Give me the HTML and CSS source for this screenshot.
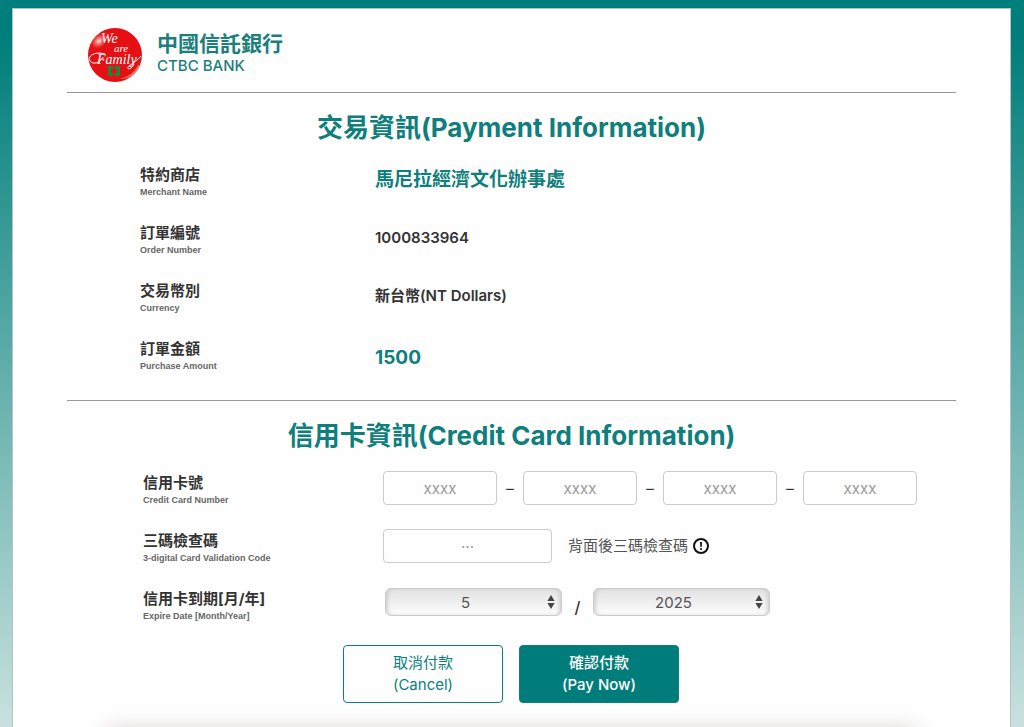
FILE: index.html
```
<!DOCTYPE html>
<html lang="zh-Hant">
<head>
  <meta charset="UTF-8" />
  <meta name="viewport" content="width=device-width, initial-scale=1.0"/>
  <title>CTBC BANK</title>
  <link rel="stylesheet" href="styles.css">
</head>
<body>

  <div class="page">
    <header class="header">
      <svg class="logo" viewBox="0 0 56 56" role="img" aria-label="We are Family">
        <defs>
          <radialGradient id="shine" cx="50%" cy="50%" r="50%">
            <stop offset="0" stop-color="#fff" stop-opacity="0.9"/>
            <stop offset="1" stop-color="#f58a70" stop-opacity="0"/>
          </radialGradient>
        </defs>
        <circle cx="28" cy="28" r="27" fill="#e60f14"/>
        <ellipse cx="12" cy="14" rx="9" ry="7" transform="rotate(-40 12 14)" fill="url(#shine)"/>
        <path d="M51 38 C48 45 41 50 33 52 C43 52 50 46 53 38 Z" fill="#f2705c"/>
        <g class="logo-text">
          <text x="14" y="16" font-size="14">We</text>
          <text x="27" y="25" font-size="11">are</text>
          <text x="10" y="37" font-size="14">Family</text>
        </g>
        <path d="M18 27 C8 24 0 29 3 34 C6 38 13 36 16 30" fill="none" stroke="#fff" stroke-width="1"/>
        <path d="M47 37 C44 44 38 42 42 39 C46 36 51 33 54 29" fill="none" stroke="#fff" stroke-width="1"/>
        <path d="M21 39h5v3h-2v4h2v3h-5zM28 39h5v10h-5v-3h2v-4h-2z" fill="#138a3e"/>
      </svg>
      <div class="brand">
        <span class="brand-zh">中國信託銀行</span>
        <span class="brand-en">CTBC BANK</span>
      </div>
    </header>

    <section class="section">
      <h1>交易資訊(Payment Information)</h1>
      <dl class="info">
        <div class="row">
          <dt>特約商店<small>Merchant Name</small></dt>
          <dd class="big">馬尼拉經濟文化辦事處</dd>
        </div>
        <div class="row">
          <dt>訂單編號<small>Order Number</small></dt>
          <dd>1000833964</dd>
        </div>
        <div class="row">
          <dt>交易幣別<small>Currency</small></dt>
          <dd>新台幣(NT Dollars)</dd>
        </div>
        <div class="row">
          <dt>訂單金額<small>Purchase Amount</small></dt>
          <dd class="big amount">1500</dd>
        </div>
      </dl>
    </section>

    <section class="section">
      <h1>信用卡資訊(Credit Card Information)</h1>
      <form class="card-form">
        <div class="row">
          <label for="card1">信用卡號<small>Credit Card Number</small></label>
          <div class="field">
            <input type="text" id="card1" placeholder="xxxx" maxlength="4">
            <span class="dash">–</span>
            <input type="text" aria-label="Card number 2" placeholder="xxxx" maxlength="4">
            <span class="dash">–</span>
            <input type="text" aria-label="Card number 3" placeholder="xxxx" maxlength="4">
            <span class="dash">–</span>
            <input type="text" aria-label="Card number 4" placeholder="xxxx" maxlength="4">
          </div>
        </div>
        <div class="row">
          <label for="cvc">三碼檢查碼<small>3-digital Card Validation Code</small></label>
          <div class="field">
            <input type="text" id="cvc" class="cvc" placeholder="···" maxlength="3">
            <span class="hint">背面後三碼檢查碼</span>
            <svg class="info-icon" viewBox="0 0 18 18" aria-hidden="true">
              <circle cx="9" cy="9" r="7" fill="none" stroke="#111" stroke-width="2"/>
              <path d="M8 5h2l-0.3 5h-1.4z" fill="#111"/>
              <circle cx="9" cy="12" r="1.1" fill="#111"/>
            </svg>
          </div>
        </div>
        <div class="row">
          <label for="month">信用卡到期[月/年]<small>Expire Date [Month/Year]</small></label>
          <div class="field expire">
            <div class="select">
              <select id="month">
                <option>1</option><option>2</option><option>3</option><option>4</option>
                <option selected>5</option><option>6</option><option>7</option><option>8</option>
                <option>9</option><option>10</option><option>11</option><option>12</option>
              </select>
              <svg class="arrows" viewBox="0 0 8 14" aria-hidden="true"><path d="M4 0l3.6 6H0.4zM4 14l3.6-6H0.4z"/></svg>
            </div>
            <span class="slash">/</span>
            <div class="select">
              <select id="year" aria-label="Year">
                <option selected>2025</option><option>2026</option><option>2027</option>
                <option>2028</option><option>2029</option><option>2030</option>
              </select>
              <svg class="arrows" viewBox="0 0 8 14" aria-hidden="true"><path d="M4 0l3.6 6H0.4zM4 14l3.6-6H0.4z"/></svg>
            </div>
          </div>
        </div>
        <div class="buttons">
          <button type="button" class="btn">取消付款<br>(Cancel)</button>
          <button type="submit" class="btn btn-pay">確認付款<br>(Pay Now)</button>
        </div>
      </form>
    </section>

    <div class="page-end"></div>
  </div>

</body>
</html>
```
FILE: styles.css
```
* {
  box-sizing: border-box;
}

body {
  margin: 0;
  padding: 8px 13px 0 12px;
  min-height: 100vh;
  display: flex;
  background: linear-gradient(#007e7b 5%, #cfe4e1 100%);
  font-family: Inter, "Noto Sans CJK TC", sans-serif;
  color: #333;
}

.page {
  flex: 1;
  display: flex;
  flex-direction: column;
  padding: 0 54px;
  background: #fefefe;
  border: 1px solid #b4c4c4;
  border-bottom: 0;
}

.header {
  display: flex;
  align-items: center;
  gap: 14px;
  height: 83px;
  padding: 8px 20px 0;
}

.logo {
  width: 56px;
  height: 56px;
}

.logo-text {
  fill: #fff;
  font-family: "Liberation Serif", serif;
  font-style: italic;
}

.brand {
  display: flex;
  flex-direction: column;
  color: #1c7f7c;
}

.brand-zh {
  font-size: 21px;
  font-weight: 700;
  line-height: 22px;
}

.brand-en {
  font-size: 15px;
  font-weight: 500;
  line-height: 22px;
}

.section {
  border-top: 1px solid #999;
}

h1 {
  margin: 0;
  padding-top: 16px;
  font-size: 26px;
  font-weight: 700;
  line-height: 38px;
  text-align: center;
  color: #0e7f7c;
}

.info {
  margin: 0;
  padding: 16px 0 5px 73px;
}

.card-form {
  padding: 16px 0 0 76px;
}

.row {
  display: flex;
  height: 58px;
}

dt,
label {
  flex: 0 0 235px;
  font-size: 15px;
  font-weight: 700;
  line-height: 23px;
}

label {
  flex-basis: 240px;
}

small {
  display: block;
  font-family: "Liberation Sans Narrow", "Liberation Sans", sans-serif;
  font-size: 9px;
  line-height: 12px;
  color: #666;
}

dd {
  margin: 0;
  font-size: 15px;
  font-weight: 600;
  line-height: 34px;
}

dd.big {
  font-size: 19px;
  font-weight: 700;
  color: #0e7f7c;
}

dd.amount {
  padding-top: 4px;
}

.field {
  display: flex;
  align-items: center;
  height: 34px;
}

input {
  width: 114px;
  height: 34px;
  padding: 0;
  border: 1px solid #ccc;
  border-radius: 4px;
  background: #fefefe;
  font: 15px Inter, "Noto Sans CJK TC", sans-serif;
  color: #555;
  text-align: center;
}

input::placeholder {
  color: #999;
}

.cvc {
  width: 169px;
}

.dash {
  width: 26px;
  font-size: 15px;
  text-align: center;
}

.hint {
  padding: 0 4px 0 16px;
  font-size: 15px;
  line-height: 22px;
  color: #555;
}

.info-icon {
  width: 18px;
  height: 18px;
}

.expire {
  height: 30px;
  padding-left: 2px;
}

.select {
  position: relative;
  width: 177px;
}

select {
  display: block;
  appearance: none;
  width: 100%;
  height: 28px;
  padding: 0 16px 0 0;
  border: 1px solid #ccc;
  border-radius: 6px;
  background: linear-gradient(#e2e2e2, #fcfcfc);
  box-shadow: inset 3px 0 4px -2px #c4c4c4, inset -3px 0 4px -2px #c4c4c4;
  font: 15px Inter, sans-serif;
  color: #555;
  text-align-last: center;
}

.arrows {
  position: absolute;
  top: 7px;
  right: 7px;
  width: 8px;
  height: 14px;
  fill: #444;
  pointer-events: none;
}

.slash {
  width: 31px;
  padding-top: 10px;
  font-size: 16px;
  font-weight: 500;
  text-align: center;
}

.buttons {
  display: flex;
  justify-content: center;
  gap: 16px;
  margin-left: -77px;
}

.btn {
  width: 160px;
  height: 58px;
  padding: 0;
  border: 1px solid #0e7f7c;
  border-radius: 4px;
  background: #fefefe;
  font: 15px/22px Inter, "Noto Sans CJK TC", sans-serif;
  color: #0e7f7c;
}

.btn-pay {
  background: #007d7a;
  font-weight: 500;
  color: #fff;
}

.page-end {
  flex: 1;
  min-height: 20px;
  margin: 0 20px;
  overflow: hidden;
}

/* soft shadow of the block below the buttons */
.page-end::before {
  content: "";
  display: block;
  height: 20px;
  margin: 26px 20px 0;
  box-shadow: 0 0 20px #d8cfcf;
}
```
